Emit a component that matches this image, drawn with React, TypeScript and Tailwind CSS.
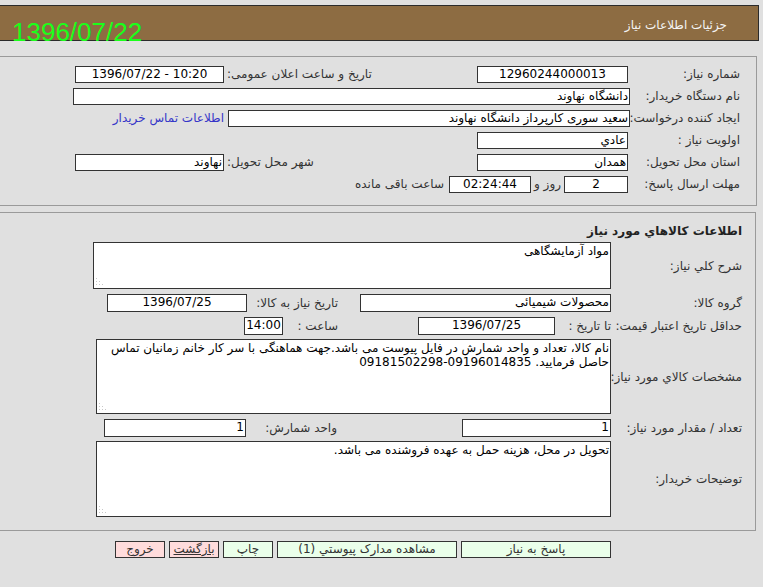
import React from 'react'

const FONT = { fontFamily: 'Tahoma, "DejaVu Sans", sans-serif' }

function Box({ className = '', children, ltr }: { className?: string; children?: React.ReactNode; ltr?: boolean }) {
    return (
        <div
            dir={ltr ? 'ltr' : undefined}
            className={`shrink-0 h-[17px] bg-white border border-[#333] text-black leading-[15px] px-[1px] whitespace-nowrap overflow-hidden ${className}`}
        >
            {children}
        </div>
    )
}

// textarea with the little resize grip drawn at the bottom-left, as the RTL page shows it
function Area({ className = '', value }: { className?: string; value: string }) {
    return (
        <div className={`relative shrink-0 ${className}`}>
            <textarea
                readOnly
                dir="rtl"
                value={value}
                className="block w-full h-full resize-none bg-white border border-[#333] text-black text-[12px] leading-[14px] px-[1px] py-[1px] outline-none overflow-hidden"
                style={FONT}
            />
            <svg className="absolute left-[3px] bottom-[3px]" width="8" height="8" viewBox="0 0 8 8">
                <g fill="#c8c8c8">
                    <rect x="0" y="0" width="1" height="1" />
                    <rect x="0" y="3" width="1" height="1" />
                    <rect x="3" y="3" width="1" height="1" />
                    <rect x="0" y="6" width="1" height="1" />
                    <rect x="3" y="6" width="1" height="1" />
                    <rect x="6" y="6" width="1" height="1" />
                </g>
            </svg>
        </div>
    )
}

function Label({ className = '', children }: { className?: string; children: React.ReactNode }) {
    return <div className={`shrink-0 whitespace-nowrap ${className}`}>{children}</div>
}

export default function App() {
    return (
        <div dir="rtl" className="w-[763px] h-[587px] bg-[#e0e0e0] overflow-hidden text-[12px] text-[#333]" style={FONT}>
            {/* Header bar */}
            <div className="pt-[5px]">
                <div className="mr-auto w-[759px] h-[36px] bg-[#8d6c42] border border-l-0 border-[#2b2b2b] flex items-center justify-between">
                    <span className="pr-[31px] text-[#f4f4f4] text-[12px] mt-[4px]">جزئیات اطلاعات نیاز</span>
                    <span
                        dir="ltr"
                        className="self-end translate-y-[5px] pl-[12px] text-[#1aff1a] text-[26px] leading-[26px]"
                        style={{ fontFamily: '"Liberation Sans", Arial, sans-serif' }}
                    >
                        1396/07/22
                    </span>
                </div>
            </div>

            {/* Section 1: need details */}
            <div className="mr-auto mt-[15px] w-[757px] h-[150px] border border-l-0 border-[#9a9a9a] pr-[16px] pt-[6px]">
                <div className="flex items-center h-[22px]">
                    <Label className="w-[112px]">شماره نیاز:</Label>
                    <Box className="w-[151px] text-center">12960244000013</Box>
                    <Label className="w-[253px] text-left pl-[3px]">تاریخ و ساعت اعلان عمومی:</Label>
                    <Box ltr className="w-[149px] text-center">1396/07/22 - 10:20</Box>
                </div>
                <div className="flex items-center h-[22px]">
                    <Label className="w-[110px]">نام دستگاه خریدار:</Label>
                    <Box className="w-[557px]">دانشگاه نهاوند</Box>
                </div>
                <div className="flex items-center h-[22px]">
                    <Label className="w-[110px]">ایجاد کننده درخواست:</Label>
                    <Box className="w-[402px]">سعید سوری کارپرداز دانشگاه نهاوند</Box>
                    <a className="pr-[4px] text-[#3535c8] whitespace-nowrap">اطلاعات تماس خریدار</a>
                </div>
                <div className="flex items-center h-[22px]">
                    <Label className="w-[112px]">اولویت نیاز :</Label>
                    <Box className="w-[151px]">عادي</Box>
                </div>
                <div className="flex items-center h-[22px]">
                    <Label className="w-[112px]">استان محل تحویل:</Label>
                    <Box className="w-[151px]">همدان</Box>
                    <Label className="w-[253px] text-left pl-[3px]">شهر محل تحویل:</Label>
                    <Box className="w-[149px]">نهاوند</Box>
                </div>
                <div className="flex items-center h-[22px]">
                    <Label className="w-[112px]">مهلت ارسال پاسخ:</Label>
                    <Box className="w-[64px] text-center">2</Box>
                    <span className="px-[3px] whitespace-nowrap">روز و</span>
                    <Box className="w-[82px] text-center">02:24:44</Box>
                    <span className="pr-[5px] whitespace-nowrap">ساعت باقی مانده</span>
                </div>
            </div>

            {/* Section 2: goods */}
            <div className="mr-auto mt-[6px] w-[756px] h-[319px] border border-l-0 border-[#9a9a9a] pr-[13px]">
                <div className="h-[29px] pt-[9px] font-bold text-[12px] text-[#222]">اطلاعات كالاهاي مورد نياز</div>
                <div className="flex items-center">
                    <Label className="w-[131px]">شرح کلي نياز:</Label>
                    <Area className="w-[518px] h-[47px]" value="مواد آزمایشگاهی" />
                </div>
                <div className="flex items-center h-[18px] mt-[5px]">
                    <Label className="w-[131px]">گروه کالا:</Label>
                    <Box className="w-[251px] h-[18px]">محصولات شیمیائی</Box>
                    <Label className="w-[113px] pr-[22px]">تاریخ نیاز به کالا:</Label>
                    <Box className="w-[140px] h-[18px] text-center">1396/07/25</Box>
                </div>
                <div className="flex items-center h-[18px] mt-[5px]">
                    <Label className="w-[131px]">حداقل تاریخ اعتبار قیمت:</Label>
                    <Label className="w-[56px]">تا تاریخ :</Label>
                    <Box className="w-[137px] h-[18px] text-center">1396/07/25</Box>
                    <Label className="w-[135px] pr-[80px]">ساعت :</Label>
                    <Box className="w-[39px] h-[18px] text-center">14:00</Box>
                </div>
                <div className="flex items-center mt-[4px]">
                    <Label className="w-[131px]">مشخصات کالاي مورد نياز:</Label>
                    <Area
                        className="w-[515px] h-[75px]"
                        value={'نام کالا، تعداد و واحد شمارش در فایل پیوست می باشد.جهت هماهنگی با سر کار خانم زمانیان تماس\nحاصل فرمایید. \u206609181502298-09196014835\u2069'}
                    />
                </div>
                <div className="flex items-center h-[18px] mt-[5px]">
                    <Label className="w-[131px]">تعداد / مقدار مورد نیاز:</Label>
                    <Box className="w-[149px] h-[18px]">1</Box>
                    <Label className="w-[216px] pr-[125px]">واحد شمارش:</Label>
                    <Box className="w-[142px] h-[18px]">1</Box>
                </div>
                <div className="flex items-center mt-[4px]">
                    <Label className="w-[131px]">توضیحات خریدار:</Label>
                    <Area className="w-[515px] h-[76px]" value="تحویل در محل، هزینه حمل به عهده فروشنده می باشد." />
                </div>
            </div>

            {/* Action buttons */}
            <div className="flex items-center gap-[4px] pr-[152px] mt-[10px]">
                <button className="w-[150px] h-[17px] bg-[#eaffea] border border-[#333] text-[#333] text-[12px] leading-[15px]">پاسخ به نیاز</button>
                <button className="w-[180px] h-[17px] bg-[#eaffea] border border-[#333] text-[#333] text-[12px] leading-[15px]">مشاهده مدارک پیوستي (1)</button>
                <button className="w-[50px] h-[17px] bg-[#eaffea] border border-[#333] text-[#333] text-[12px] leading-[15px]">چاپ</button>
                <button className="w-[50px] h-[17px] bg-[#ffdcdc] border border-[#333] text-[#333] text-[12px] leading-[15px] underline">بازگشت</button>
                <button className="w-[50px] h-[17px] bg-[#ffdcdc] border border-[#333] text-[#333] text-[12px] leading-[15px]">خروج</button>
            </div>
        </div>
    )
}
